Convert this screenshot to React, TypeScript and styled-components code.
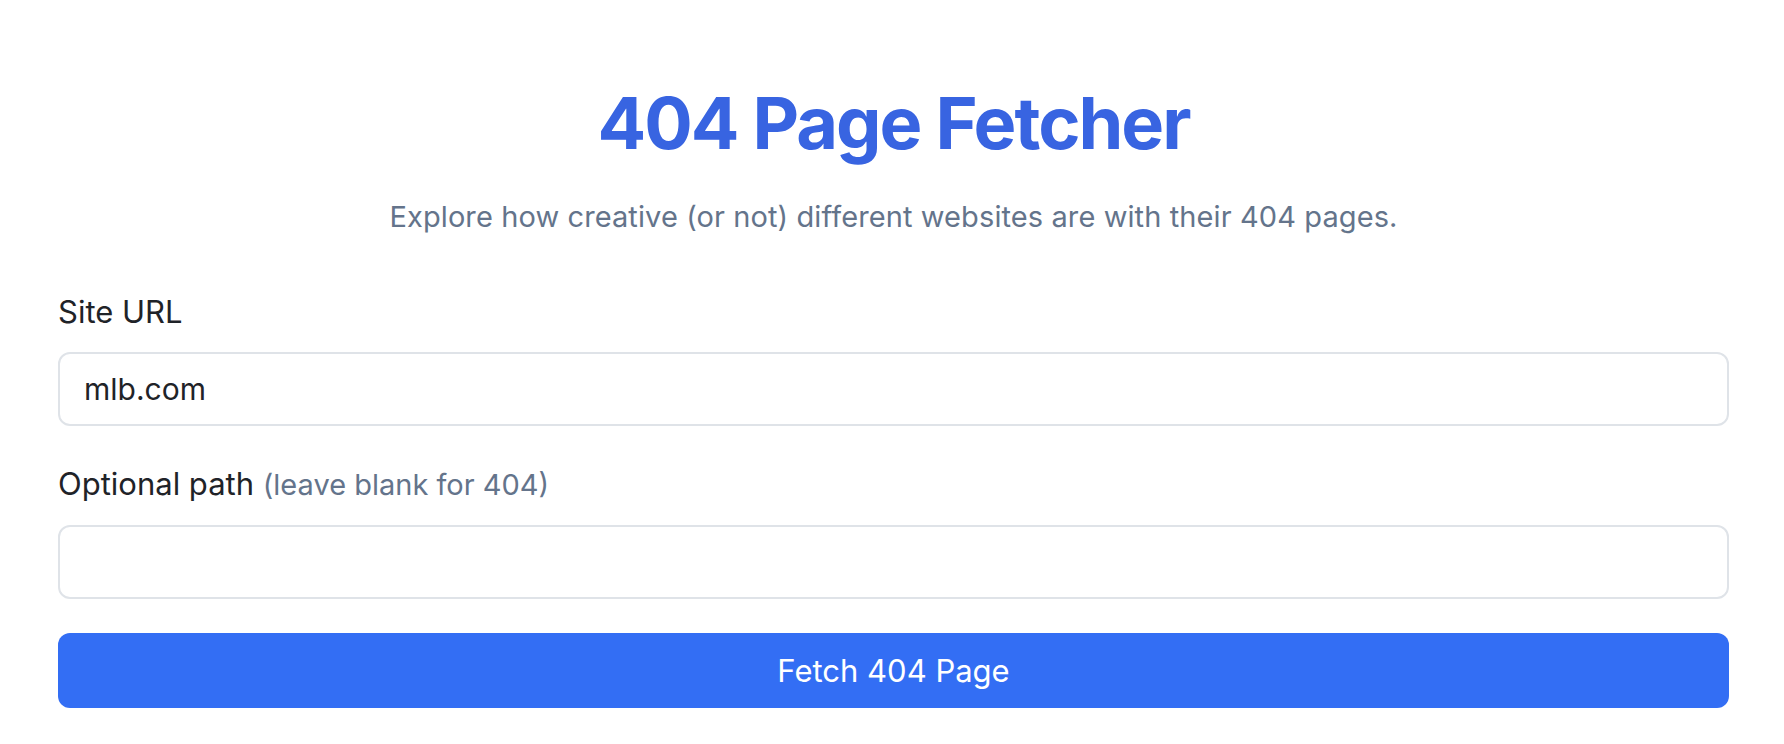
import React from "react";
import styled, { createGlobalStyle } from "styled-components";

const Global = createGlobalStyle`
  html, body { margin: 0; padding: 0; background: #ffffff; }
  body { font-family: Inter, "Noto Sans", "Liberation Sans", sans-serif; color: #1f2328; }
  * { box-sizing: border-box; }
`;

const Page = styled.main`
  display: flex;
  flex-direction: column;
  padding: 80px 55px 36px 58px;
`;

const Header = styled.header`
  display: flex;
  flex-direction: column;
  align-items: center;
  gap: 30px;
`;

const Title = styled.h1`
  margin: 0;
  font-size: 72px;
  line-height: 1.2;
  font-weight: 700;
  color: #3864e1;
  letter-spacing: -2px;
`;

const Subtitle = styled.p`
  margin: 0;
  font-size: 29px;
  line-height: 1.45;
  color: #64748b;
  letter-spacing: 0.1px;
`;

const Form = styled.form`
  display: flex;
  flex-direction: column;
  margin-top: 50px;
  gap: 34px;
`;

const Field = styled.div`
  display: flex;
  flex-direction: column;
  gap: 16px;
`;

const Label = styled.label`
  font-size: 31px;
  line-height: 48px;
  color: #1f2328;
`;

const Hint = styled.span`
  color: #64748b;
  font-size: 29px;
`;

const Input = styled.input`
  height: 74px;
  width: 100%;
  border: 2px solid #dfe3e8;
  border-radius: 12px;
  padding: 0 24px;
  font-family: inherit;
  font-size: 30px;
  color: #1f2328;
  background: #ffffff;
  outline: none;
`;

const Button = styled.button`
  height: 75px;
  width: 100%;
  border: none;
  border-radius: 12px;
  background: #336ef4;
  color: #ffffff;
  font-family: inherit;
  font-size: 31px;
  cursor: pointer;
`;

export default function App() {
  return (
    <>
      <Global />
      <Page>
        <Header>
          <Title>404 Page Fetcher</Title>
          <Subtitle>Explore how creative (or not) different websites are with their 404 pages.</Subtitle>
        </Header>
        <Form onSubmit={(e) => e.preventDefault()}>
          <Field>
            <Label htmlFor="site">Site URL</Label>
            <Input id="site" defaultValue="mlb.com" />
          </Field>
          <Field>
            <Label htmlFor="path">
              Optional path <Hint>(leave blank for 404)</Hint>
            </Label>
            <Input id="path" />
          </Field>
          <Button type="submit">Fetch 404 Page</Button>
        </Form>
      </Page>
    </>
  );
}
